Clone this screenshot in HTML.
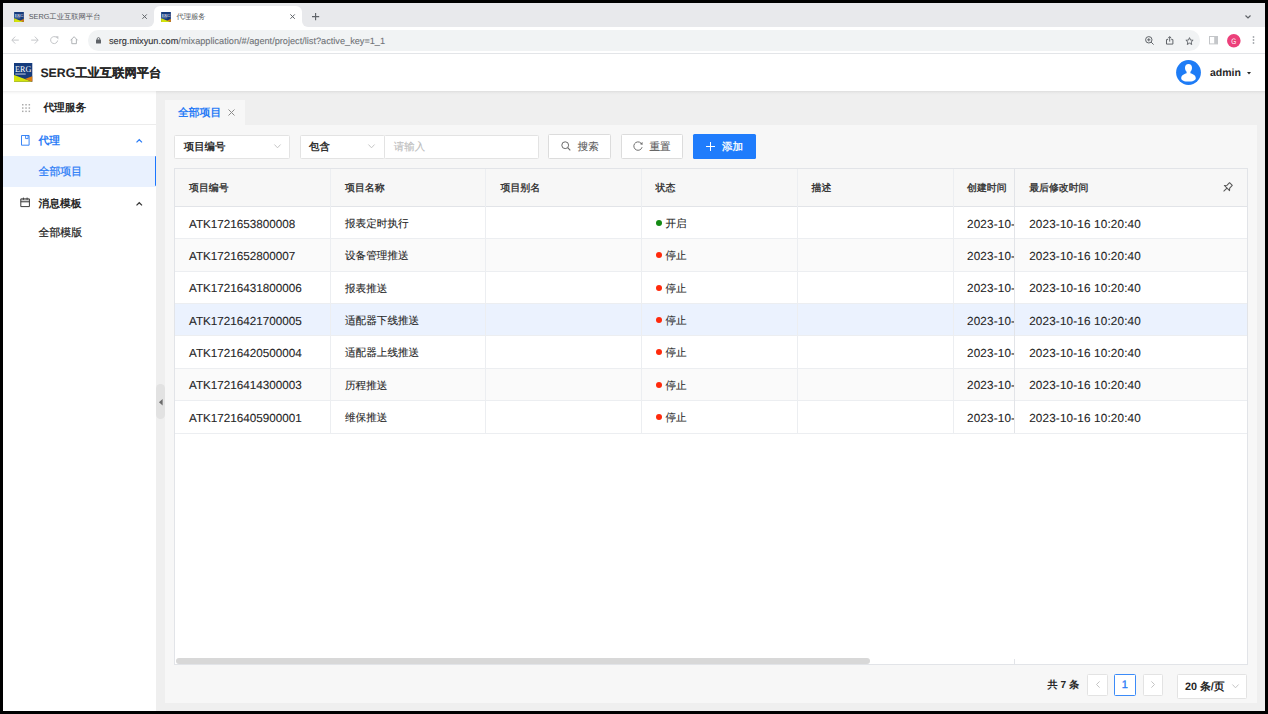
<!DOCTYPE html>
<html><head><meta charset="utf-8">
<style>
*{box-sizing:border-box;margin:0;padding:0}
html,body{width:1268px;height:714px;overflow:hidden;background:#000;font-family:"Liberation Sans",sans-serif;color:#262626;text-rendering:geometricPrecision}
.a{-webkit-text-stroke:.1px currentColor}
.nb{-webkit-text-stroke:0}
.a{position:absolute;white-space:nowrap}
svg{position:absolute;overflow:visible}
/* chrome */
#tabstrip{left:3px;top:3px;width:1262px;height:24px;background:#e8e9ec}
.tabt{font-size:7.3px;color:#55585c;line-height:10px;-webkit-text-stroke:0}
#toolbar{left:3px;top:27px;width:1262px;height:27px;background:#fff;border-bottom:1px solid #e3e5e8}
#omni{left:87.5px;top:30px;width:1112.5px;height:20.5px;background:#f1f3f4;border-radius:10.25px}
#url{left:109px;top:35.5px;font-size:9.18px;line-height:10px;color:#6f7276;-webkit-text-stroke:.1px currentColor}
#url b{font-weight:normal;color:#303134;-webkit-text-stroke:.12px #303134}
/* app */
#apphdr{left:3px;top:54px;width:1262px;height:37px;background:#fff}
#hdrshadow{left:3px;top:91px;width:1262px;height:4px;background:linear-gradient(rgba(0,0,0,.07),rgba(0,0,0,.02) 50%,rgba(0,0,0,0))}
#title{-webkit-text-stroke:.1px currentColor;left:40.4px;top:65.6px;font-size:12.3px;line-height:14px;font-weight:bold;color:#262626}
#admin{-webkit-text-stroke:0;left:1210px;top:66.5px;font-size:10.5px;line-height:12px;font-weight:bold;color:#262626}
#sidebar{left:3px;top:91px;width:153px;height:620px;background:#fff}
#content{left:156px;top:91px;width:1109px;height:620px;background:#efefef}
.menu{-webkit-text-stroke:0;font-size:10.7px;line-height:12px;font-weight:bold;color:#262626}
#panel{left:165px;top:125px;width:1092px;height:578px;background:#f7f7f7}
#ctab{left:165px;top:100px;width:80px;height:25px;background:#f7f7f7}
.box{background:#fff;border:1px solid #e3e3e3;border-radius:1.5px}
.txt{font-size:10.5px;line-height:12px;color:#262626}
.btn{background:#fff;border:1px solid #dcdcdc;border-radius:1.5px}
#table{left:174px;top:168px;width:1074px;height:497px;background:#fff;border:1px solid #e2e4e8}
.hrow{background:#f7f7f7}
.hl{background:#e2e4e8}
.htxt{-webkit-text-stroke:.3px currentColor;font-size:9.9px;line-height:12px;color:#2a2a2a;font-weight:normal}
.btxt{font-size:11.7px;line-height:12px;margin-top:2px;color:#262626;-webkit-text-stroke:.1px currentColor}
.ctxt{font-size:10.6px;line-height:12px;margin-top:1.2px;color:#262626}
</style></head>
<body>
<!-- ============ BROWSER CHROME ============ -->
<div class="a" id="tabstrip"></div>
<!-- inactive tab -->
<svg style="left:13.7px;top:12px" width="10" height="10" viewBox="0 0 183 188">
  <rect x="0" y="0" width="183" height="188" fill="#153b7c"/>
  <path d="M0 119L109 159L183 188H0Z" fill="#d4e30a"/>
  <path d="M109 159L183 132V188Z" fill="#dd7f12"/>
  <text x="11" y="89" font-size="88" font-family="Liberation Serif" fill="#fff" textLength="163" lengthAdjust="spacingAndGlyphs">ERG</text>
  <rect x="13" y="104" width="104" height="13" fill="#b8c4dc" opacity=".8"/>
</svg>
<div class="a tabt" style="left:28.7px;top:12px">SERG工业互联网平台</div>
<svg style="left:141.6px;top:14.1px" width="5.2" height="5.2" viewBox="0 0 5.2 5.2"><path d="M.4 .4L4.8 4.8M4.8 .4L.4 4.8" stroke="#5f6368" stroke-width="1"/></svg>
<!-- active tab -->
<div class="a" style="left:148px;top:21px;width:160px;height:6px;background:#fff"></div><div class="a" style="left:148px;top:21px;width:6px;height:6px;background:#e8e9ec;border-radius:0 0 6px 0"></div><div class="a" style="left:302px;top:21px;width:6px;height:6px;background:#e8e9ec;border-radius:0 0 0 6px"></div><div class="a" style="left:154px;top:6px;width:148px;height:21px;background:#fff;border-radius:6px 6px 0 0"></div>
<svg style="left:161px;top:12px" width="10" height="10" viewBox="0 0 183 188">
  <rect x="0" y="0" width="183" height="188" fill="#153b7c"/>
  <path d="M0 119L109 159L183 188H0Z" fill="#d4e30a"/>
  <path d="M109 159L183 132V188Z" fill="#dd7f12"/>
  <text x="11" y="89" font-size="88" font-family="Liberation Serif" fill="#fff" textLength="163" lengthAdjust="spacingAndGlyphs">ERG</text>
  <rect x="13" y="104" width="104" height="13" fill="#b8c4dc" opacity=".8"/>
</svg>
<div class="a tabt" style="left:176.4px;top:12px">代理服务</div>
<svg style="left:289.6px;top:14.1px" width="5.2" height="5.2" viewBox="0 0 5.2 5.2"><path d="M.4 .4L4.8 4.8M4.8 .4L.4 4.8" stroke="#5f6368" stroke-width="1"/></svg>
<svg style="left:312.3px;top:13px" width="7.2" height="7.2" viewBox="0 0 7.2 7.2"><path d="M3.6 0V7.2M0 3.6H7.2" stroke="#5f6368" stroke-width="1.15"/></svg>
<svg style="left:1245px;top:15px" width="6" height="4" viewBox="0 0 6 4"><path d="M.5 .5L3 3L5.5 .5" stroke="#5f6368" stroke-width="1.2" fill="none"/></svg>

<div class="a" id="toolbar"></div>
<!-- nav icons -->
<svg style="left:10.9px;top:35.9px" width="8" height="8.2" viewBox="0 0 8 8.2"><path d="M7.8 4.1H1M4.2 .6L.8 4.1L4.2 7.6" stroke="#c4c6c9" stroke-width="1" fill="none"/></svg>
<svg style="left:30.8px;top:35.9px" width="8" height="8.2" viewBox="0 0 8 8.2"><path d="M.2 4.1H7M3.8 .6L7.2 4.1L3.8 7.6" stroke="#c4c6c9" stroke-width="1" fill="none"/></svg>
<svg style="left:50.2px;top:36.2px" width="9" height="8.5" viewBox="0 0 9 8.5"><path d="M7.6 4.5A3.5 3.5 0 1 1 6.6 1.6" stroke="#c4c6c9" stroke-width="1" fill="none"/><path d="M5.2 .2L8.4 .2L8.4 3.4Z" fill="#c4c6c9"/></svg>
<svg style="left:70px;top:36px" width="8.2" height="8.2" viewBox="0 0 8.2 8.2"><path d="M.6 4.3L4.1 .7L7.6 4.3M1.8 3.2V7.7H6.4V3.2" stroke="#a8abaf" stroke-width=".9" fill="none" stroke-linejoin="round"/></svg>
<div class="a" id="omni"></div>
<svg style="left:96.3px;top:37px" width="5" height="6.6" viewBox="0 0 5 6.6"><rect x="0" y="2.6" width="5" height="4" rx=".6" fill="#5f6368"/><path d="M1.2 2.8V1.9A1.3 1.3 0 0 1 3.8 1.9V2.8" stroke="#5f6368" stroke-width=".9" fill="none"/></svg>
<div class="a" id="url"><b>serg.mixyun.com</b>/mixapplication/#/agent/project/list?active_key=1_1</div>
<!-- right toolbar icons -->
<svg style="left:1144.6px;top:36.4px" width="9" height="9" viewBox="0 0 9 9"><circle cx="3.8" cy="3.8" r="3.2" stroke="#5f6368" stroke-width="1" fill="none"/><path d="M6.1 6.1L8.6 8.6M3.8 2.2V5.4M2.2 3.8H5.4" stroke="#5f6368" stroke-width="1"/></svg>
<svg style="left:1165.6px;top:36px" width="7.4" height="8.6" viewBox="0 0 7.4 8.6"><path d="M2.1 3.6H.5V8.1H6.9V3.6H5.3M3.7 5.6V.7M2 2.3L3.7 .6L5.4 2.3" stroke="#5f6368" stroke-width="1" fill="none"/></svg>
<svg style="left:1184.6px;top:36.6px" width="9" height="8" viewBox="0 0 9 8.6"><path d="M4.5 .7L5.6 3.3L8.4 3.5L6.3 5.3L6.9 8.1L4.5 6.6L2.1 8.1L2.7 5.3L.6 3.5L3.4 3.3Z" stroke="#5f6368" stroke-width="1" fill="none" stroke-linejoin="round"/></svg>
<svg style="left:1209px;top:36px" width="9" height="8.4" viewBox="0 0 9 8.4"><rect x=".5" y=".5" width="8" height="7.4" stroke="#c4c6c9" stroke-width="1" fill="none"/><rect x="5.2" y=".5" width="3.3" height="7.4" fill="#c4c6c9"/></svg>
<svg style="left:1226.5px;top:33.6px" width="13.6" height="13.6" viewBox="0 0 13.6 13.6"><circle cx="6.8" cy="6.8" r="6.8" fill="#ec407a"/><text x="6.8" y="9.8" font-size="7.6" font-family="Liberation Sans" fill="#fff" text-anchor="middle" transform="translate(6.8 9.8) scale(.85 1.05) translate(-6.8 -9.8)">G</text></svg>
<svg style="left:1251.9px;top:36px" width="3" height="8" viewBox="0 0 3 8"><circle cx="1.5" cy="1" r=".9" fill="#a6a9ad"/><circle cx="1.5" cy="4" r=".9" fill="#a6a9ad"/><circle cx="1.5" cy="7" r=".9" fill="#a6a9ad"/></svg>

<!-- ============ APP HEADER ============ -->
<div class="a" id="apphdr"></div>
<svg style="left:13.9px;top:62.9px" width="18.3" height="18.8" viewBox="0 0 183 188">
  <rect x="0" y="0" width="183" height="188" fill="#153b7c"/>
  <path d="M0 119L109 159L183 188H0Z" fill="#d4e30a"/>
  <path d="M109 159L183 132V188Z" fill="#dd7f12"/>
  <text x="11" y="89" font-size="88" font-family="Liberation Serif" fill="#fff" textLength="163" lengthAdjust="spacingAndGlyphs">ERG</text>
  <rect x="13" y="104" width="104" height="13" fill="#b8c4dc" opacity=".8"/>
</svg>
<div class="a" id="title">SERG工业互联网平台</div>
<svg style="left:1176px;top:60px" width="25" height="25" viewBox="0 0 25 25">
  <circle cx="12.5" cy="12.5" r="12.4" fill="#1e7cf6"/>
  <path d="M12.5 3.9C10.3 3.9 9 5.6 9 7.8C9 9.6 9.6 10.9 10.6 11.7L10.6 13.3C8 13.9 5.2 15.6 5.2 18.2C5.2 20.3 8.5 21.6 12.5 21.6C16.5 21.6 19.8 20.3 19.8 18.2C19.8 15.6 17 13.9 14.4 13.3L14.4 11.7C15.4 10.9 16 9.6 16 7.8C16 5.6 14.7 3.9 12.5 3.9Z" fill="#fff"/>
</svg>
<div class="a" id="admin">admin</div>
<svg style="left:1246.5px;top:71.5px" width="4" height="3" viewBox="0 0 4 3"><path d="M0 0H4L2 2.4Z" fill="#262626"/></svg>

<!-- ============ SIDEBAR ============ -->
<div class="a" id="sidebar"></div>
<div class="a" style="left:3px;top:123.5px;width:153px;height:1px;background:#ececec"></div>
<svg style="left:22px;top:104px" width="8.2" height="8.2" viewBox="0 0 8.2 8.2"><g fill="#ababab"><rect x="0" y="0" width="1.5" height="1.5"/><rect x="3.3" y="0" width="1.5" height="1.5"/><rect x="6.6" y="0" width="1.5" height="1.5"/><rect x="0" y="3.3" width="1.5" height="1.5"/><rect x="3.3" y="3.3" width="1.5" height="1.5"/><rect x="6.6" y="3.3" width="1.5" height="1.5"/><rect x="0" y="6.6" width="1.5" height="1.5"/><rect x="3.3" y="6.6" width="1.5" height="1.5"/><rect x="6.6" y="6.6" width="1.5" height="1.5"/></g></svg>
<div class="a menu" style="left:43.4px;top:101.5px">代理服务</div>

<svg style="left:21px;top:135px" width="9" height="11" viewBox="0 0 9 11"><path d="M.5 .5H8.1V10.2H.5Z" stroke="#2f7ff6" stroke-width=".95" fill="none"/><path d="M4.6 .5V3.6H7.1V.5" stroke="#2f7ff6" stroke-width=".9" fill="none"/></svg>
<div class="a menu" style="left:38.6px;top:134.6px;color:#2a7cf6">代理</div>
<svg style="left:135.8px;top:138.8px" width="6.5" height="4" viewBox="0 0 6.5 4"><path d="M.5 3.4L3.25 .7L6 3.4" stroke="#2a7cf6" stroke-width="1.2" fill="none"/></svg>

<div class="a" style="left:3px;top:155.5px;width:153px;height:31px;background:#e9f1fe"></div>
<div class="a" style="left:154.6px;top:155.6px;width:2.2px;height:30.8px;background:#1a76ff;border-radius:1.1px"></div>
<div class="a menu" style="left:38.6px;top:165.7px;color:#2a7cf6;font-weight:normal;font-size:10.85px;-webkit-text-stroke:.25px #2a7cf6">全部项目</div>

<svg style="left:20px;top:196.5px" width="10.5" height="11" viewBox="0 0 10.5 11"><rect x=".8" y="1.9" width="8.6" height="2.9" fill="#d0d0d0"/><path d="M.8 1.9H9.4V9.6H.8Z M.8 4.8H9.4" stroke="#3b3b3b" stroke-width="1" fill="none"/><path d="M3.4 .6V2.8M7.1 .6V2.8" stroke="#3b3b3b" stroke-width="1"/></svg>
<div class="a menu" style="left:38.6px;top:197.8px">消息模板</div>
<svg style="left:135.8px;top:201.5px" width="6.5" height="4" viewBox="0 0 6.5 4"><path d="M.5 3.4L3.25 .7L6 3.4" stroke="#333" stroke-width="1.2" fill="none"/></svg>
<div class="a menu" style="left:38.6px;top:227px;font-weight:normal;font-size:10.85px;-webkit-text-stroke:.25px #262626">全部模版</div>

<!-- ============ CONTENT ============ -->
<div class="a" id="content"></div>
<div class="a" id="hdrshadow"></div>
<div class="a" id="ctab"></div>
<div class="a ctxt nb" style="left:178px;top:106px;color:#2a7cf6;font-weight:bold;font-size:10.8px">全部项目</div>
<svg style="left:228px;top:108.5px" width="7" height="7" viewBox="0 0 7 7"><path d="M.5 .5L6.5 6.5M6.5 .5L.5 6.5" stroke="#8c8c8c" stroke-width="1"/></svg>
<div class="a" id="panel"></div>
<!-- collapse handle -->
<div class="a" style="left:156px;top:384.3px;width:8.8px;height:34.4px;background:#e2e2e2;border-radius:4.4px"></div>
<svg style="left:158.5px;top:398.5px" width="4" height="6.5" viewBox="0 0 4 6.5"><path d="M3.6 0V6.5L0 3.25Z" fill="#6b6b6b"/></svg>

<!-- filters -->
<div class="a box" style="left:174.4px;top:134.5px;width:115.2px;height:24px"></div>
<div class="a txt nb" style="left:183.8px;top:142px;font-weight:bold;font-size:10.4px;color:#303030">项目编号</div>
<svg style="left:273.5px;top:144px" width="7" height="4.5" viewBox="0 0 7 4.5"><path d="M.4 .5L3.5 3.8L6.6 .5" stroke="#bfbfbf" stroke-width=".9" fill="none"/></svg>
<div class="a box" style="left:299.5px;top:134.5px;width:85px;height:24px"></div>
<div class="a txt nb" style="left:309px;top:142px;font-weight:bold;font-size:10.4px;color:#303030">包含</div>
<svg style="left:367.5px;top:144px" width="7" height="4.5" viewBox="0 0 7 4.5"><path d="M.4 .5L3.5 3.8L6.6 .5" stroke="#bfbfbf" stroke-width=".9" fill="none"/></svg>
<div class="a box" style="left:384px;top:134.5px;width:154.5px;height:24px"></div>
<div class="a txt" style="left:393.7px;top:140.5px;color:#bdbdbd">请输入</div>

<div class="a btn" style="left:548.4px;top:134px;width:62.4px;height:24.5px"></div>
<svg style="left:561px;top:141px" width="10" height="10" viewBox="0 0 10 10"><circle cx="4.2" cy="4.2" r="3.4" stroke="#6b6b6b" stroke-width="1" fill="none"/><path d="M6.7 6.7L9.3 9.3" stroke="#6b6b6b" stroke-width="1.1"/></svg>
<div class="a txt" style="left:577.7px;top:141px;color:#595959">搜索</div>
<div class="a btn" style="left:620.5px;top:134px;width:62.8px;height:24.5px"></div>
<svg style="left:633px;top:141px" width="10" height="10" viewBox="0 0 10 10"><path d="M7.9 2.0A4.2 4.2 0 1 0 9.1 6.2" stroke="#707070" stroke-width="1" fill="none"/><path d="M9.6 1.0L9.5 3.9L6.8 3.1Z" fill="#707070"/></svg>
<div class="a txt" style="left:649.6px;top:141px;color:#595959">重置</div>
<div class="a" style="left:692.8px;top:134px;width:63px;height:24.7px;background:#1f7cfc;border-radius:1.5px"></div>
<svg style="left:706px;top:141.5px" width="9" height="9" viewBox="0 0 9 9"><path d="M4.5 0V9M0 4.5H9" stroke="#fff" stroke-width="1"/></svg>
<div class="a txt" style="left:722px;top:141px;color:#fff;-webkit-text-stroke:.3px #fff">添加</div>

<!-- table -->
<div class="a" id="table"></div>
<div class="a hrow" style="left:175.4px;top:169.4px;width:1071.3px;height:37px"></div>
<div class="a hl" style="left:175.4px;top:206px;width:1071.3px;height:1px"></div>

<!-- GEN -->
<div class="a hl" style="left:175.4px;top:238.1px;width:1071.3px;height:1px;background:#eceef1"></div>
<div class="a" style="left:175.4px;top:239.1px;width:1071.3px;height:32.1px;background:#fafafa"></div>
<div class="a hl" style="left:175.4px;top:270.7px;width:1071.3px;height:1px;background:#eceef1"></div>
<div class="a hl" style="left:175.4px;top:303.0px;width:1071.3px;height:1px;background:#eceef1"></div>
<div class="a" style="left:175.4px;top:304.0px;width:1071.3px;height:31.9px;background:#ebf2fe"></div>
<div class="a hl" style="left:175.4px;top:335.4px;width:1071.3px;height:1px;background:#eceef1"></div>
<div class="a hl" style="left:175.4px;top:367.7px;width:1071.3px;height:1px;background:#eceef1"></div>
<div class="a" style="left:175.4px;top:368.7px;width:1071.3px;height:31.9px;background:#fafafa"></div>
<div class="a hl" style="left:175.4px;top:400.1px;width:1071.3px;height:1px;background:#eceef1"></div>
<div class="a hl" style="left:175.4px;top:432.5px;width:1071.3px;height:1px;background:#eceef1"></div>
<div class="a" style="left:330.1px;top:169.4px;width:1px;height:263.6px;background:#eceef1"></div>
<div class="a" style="left:485.4px;top:169.4px;width:1px;height:263.6px;background:#eceef1"></div>
<div class="a" style="left:641.2px;top:169.4px;width:1px;height:263.6px;background:#eceef1"></div>
<div class="a" style="left:797.3px;top:169.4px;width:1px;height:263.6px;background:#eceef1"></div>
<div class="a" style="left:952.5px;top:169.4px;width:1px;height:263.6px;background:#eceef1"></div>
<div class="a" style="left:1014px;top:169.4px;width:1px;height:263.6px;background:#e2e4e8"></div>
<div class="a" style="left:1014px;top:659px;width:1px;height:5px;background:#e2e4e8"></div>
<div class="a htxt" style="left:189px;top:182.7px">项目编号</div>
<div class="a htxt" style="left:345px;top:182.7px">项目名称</div>
<div class="a htxt" style="left:500.6px;top:182.7px">项目别名</div>
<div class="a htxt" style="left:655.6px;top:182.7px">状态</div>
<div class="a htxt" style="left:811.5px;top:182.7px">描述</div>
<div class="a htxt" style="left:967px;top:182.7px">创建时间</div>
<div class="a htxt" style="left:1029.2px;top:182.7px">最后修改时间</div>
<svg style="left:1218px;top:176px" width="20" height="20" viewBox="0 0 20 20"><g transform="translate(9.4 11.6) rotate(45) scale(1.08)"><path d="M-1.8 -4.6H1.8V-1.2L3.4 .6H-3.4L-1.8 -1.2Z" stroke="#555" stroke-width=".95" fill="none" stroke-linejoin="round"/><path d="M0 .6V5" stroke="#555" stroke-width=".95"/></g></svg>
<div class="a btxt" style="left:189px;top:216.5px">ATK1721653800008</div>
<div class="a ctxt" style="left:345px;top:216.5px">报表定时执行</div>
<div class="a" style="left:655.6px;top:219.6px;width:6.2px;height:6.2px;border-radius:50%;background:#138a13"></div>
<div class="a ctxt" style="left:665.4px;top:216.5px">开启</div>
<div class="a" style="left:967px;top:218.5px;width:46.5px;height:14px;overflow:hidden"><div class="btxt" style="letter-spacing:.17px;margin-top:0">2023-10-16 10:20:40</div></div>
<div class="a btxt" style="left:1029.2px;top:216.5px;letter-spacing:.17px">2023-10-16 10:20:40</div>
<div class="a btxt" style="left:189px;top:248.9px">ATK1721652800007</div>
<div class="a ctxt" style="left:345px;top:248.9px">设备管理推送</div>
<div class="a" style="left:655.6px;top:252.0px;width:6.2px;height:6.2px;border-radius:50%;background:#ff2a0c"></div>
<div class="a ctxt" style="left:665.4px;top:248.9px">停止</div>
<div class="a" style="left:967px;top:250.9px;width:46.5px;height:14px;overflow:hidden"><div class="btxt" style="letter-spacing:.17px;margin-top:0">2023-10-16 10:20:40</div></div>
<div class="a btxt" style="left:1029.2px;top:248.9px;letter-spacing:.17px">2023-10-16 10:20:40</div>
<div class="a btxt" style="left:189px;top:281.4px">ATK17216431800006</div>
<div class="a ctxt" style="left:345px;top:281.4px">报表推送</div>
<div class="a" style="left:655.6px;top:284.5px;width:6.2px;height:6.2px;border-radius:50%;background:#ff2a0c"></div>
<div class="a ctxt" style="left:665.4px;top:281.4px">停止</div>
<div class="a" style="left:967px;top:283.4px;width:46.5px;height:14px;overflow:hidden"><div class="btxt" style="letter-spacing:.17px;margin-top:0">2023-10-16 10:20:40</div></div>
<div class="a btxt" style="left:1029.2px;top:281.4px;letter-spacing:.17px">2023-10-16 10:20:40</div>
<div class="a btxt" style="left:189px;top:313.7px">ATK17216421700005</div>
<div class="a ctxt" style="left:345px;top:313.7px">适配器下线推送</div>
<div class="a" style="left:655.6px;top:316.8px;width:6.2px;height:6.2px;border-radius:50%;background:#ff2a0c"></div>
<div class="a ctxt" style="left:665.4px;top:313.7px">停止</div>
<div class="a" style="left:967px;top:315.7px;width:46.5px;height:14px;overflow:hidden"><div class="btxt" style="letter-spacing:.17px;margin-top:0">2023-10-16 10:20:40</div></div>
<div class="a btxt" style="left:1029.2px;top:313.7px;letter-spacing:.17px">2023-10-16 10:20:40</div>
<div class="a btxt" style="left:189px;top:346.0px">ATK17216420500004</div>
<div class="a ctxt" style="left:345px;top:346.0px">适配器上线推送</div>
<div class="a" style="left:655.6px;top:349.1px;width:6.2px;height:6.2px;border-radius:50%;background:#ff2a0c"></div>
<div class="a ctxt" style="left:665.4px;top:346.0px">停止</div>
<div class="a" style="left:967px;top:348.0px;width:46.5px;height:14px;overflow:hidden"><div class="btxt" style="letter-spacing:.17px;margin-top:0">2023-10-16 10:20:40</div></div>
<div class="a btxt" style="left:1029.2px;top:346.0px;letter-spacing:.17px">2023-10-16 10:20:40</div>
<div class="a btxt" style="left:189px;top:378.4px">ATK17216414300003</div>
<div class="a ctxt" style="left:345px;top:378.4px">历程推送</div>
<div class="a" style="left:655.6px;top:381.5px;width:6.2px;height:6.2px;border-radius:50%;background:#ff2a0c"></div>
<div class="a ctxt" style="left:665.4px;top:378.4px">停止</div>
<div class="a" style="left:967px;top:380.4px;width:46.5px;height:14px;overflow:hidden"><div class="btxt" style="letter-spacing:.17px;margin-top:0">2023-10-16 10:20:40</div></div>
<div class="a btxt" style="left:1029.2px;top:378.4px;letter-spacing:.17px">2023-10-16 10:20:40</div>
<div class="a btxt" style="left:189px;top:410.8px">ATK17216405900001</div>
<div class="a ctxt" style="left:345px;top:410.8px">维保推送</div>
<div class="a" style="left:655.6px;top:413.9px;width:6.2px;height:6.2px;border-radius:50%;background:#ff2a0c"></div>
<div class="a ctxt" style="left:665.4px;top:410.8px">停止</div>
<div class="a" style="left:967px;top:412.8px;width:46.5px;height:14px;overflow:hidden"><div class="btxt" style="letter-spacing:.17px;margin-top:0">2023-10-16 10:20:40</div></div>
<div class="a btxt" style="left:1029.2px;top:410.8px;letter-spacing:.17px">2023-10-16 10:20:40</div>
<div class="a" style="left:176px;top:657.8px;width:694.4px;height:6.4px;background:#d8d8d8;border-radius:3.2px"></div>
<div class="a txt nb" style="left:1047.6px;top:679.8px;font-weight:bold;font-size:10.2px">共 7 条</div>
<div class="a btn" style="left:1087.4px;top:674px;width:20.9px;height:21.6px;border-color:#e3e3e3"></div>
<svg style="left:1095.5px;top:681px" width="4" height="7" viewBox="0 0 4 7"><path d="M3.6 .4L.5 3.5L3.6 6.6" stroke="#bdbdbd" stroke-width=".9" fill="none"/></svg>
<div class="a" style="left:1114.4px;top:674px;width:21.6px;height:21.6px;background:#fff;border:1px solid #3b8bf8;border-radius:1.5px"></div>
<div class="a txt" style="left:1121.8px;top:678.5px;color:#2a7cf6;font-size:11px;-webkit-text-stroke:.35px #2a7cf6">1</div>
<div class="a btn" style="left:1142.7px;top:674px;width:20.6px;height:21.6px;border-color:#e3e3e3"></div>
<svg style="left:1151px;top:681px" width="4" height="7" viewBox="0 0 4 7"><path d="M.4 .4L3.5 3.5L.4 6.6" stroke="#bdbdbd" stroke-width=".9" fill="none"/></svg>
<div class="a box" style="left:1176.5px;top:674px;width:70.9px;height:25px"></div>
<div class="a txt nb" style="left:1185px;top:680.6px;font-weight:bold;font-size:10.8px">20 条/页</div>
<svg style="left:1231.5px;top:684px" width="7" height="4.5" viewBox="0 0 7 4.5"><path d="M.4 .5L3.5 3.8L6.6 .5" stroke="#bfbfbf" stroke-width=".9" fill="none"/></svg>
</body></html>
